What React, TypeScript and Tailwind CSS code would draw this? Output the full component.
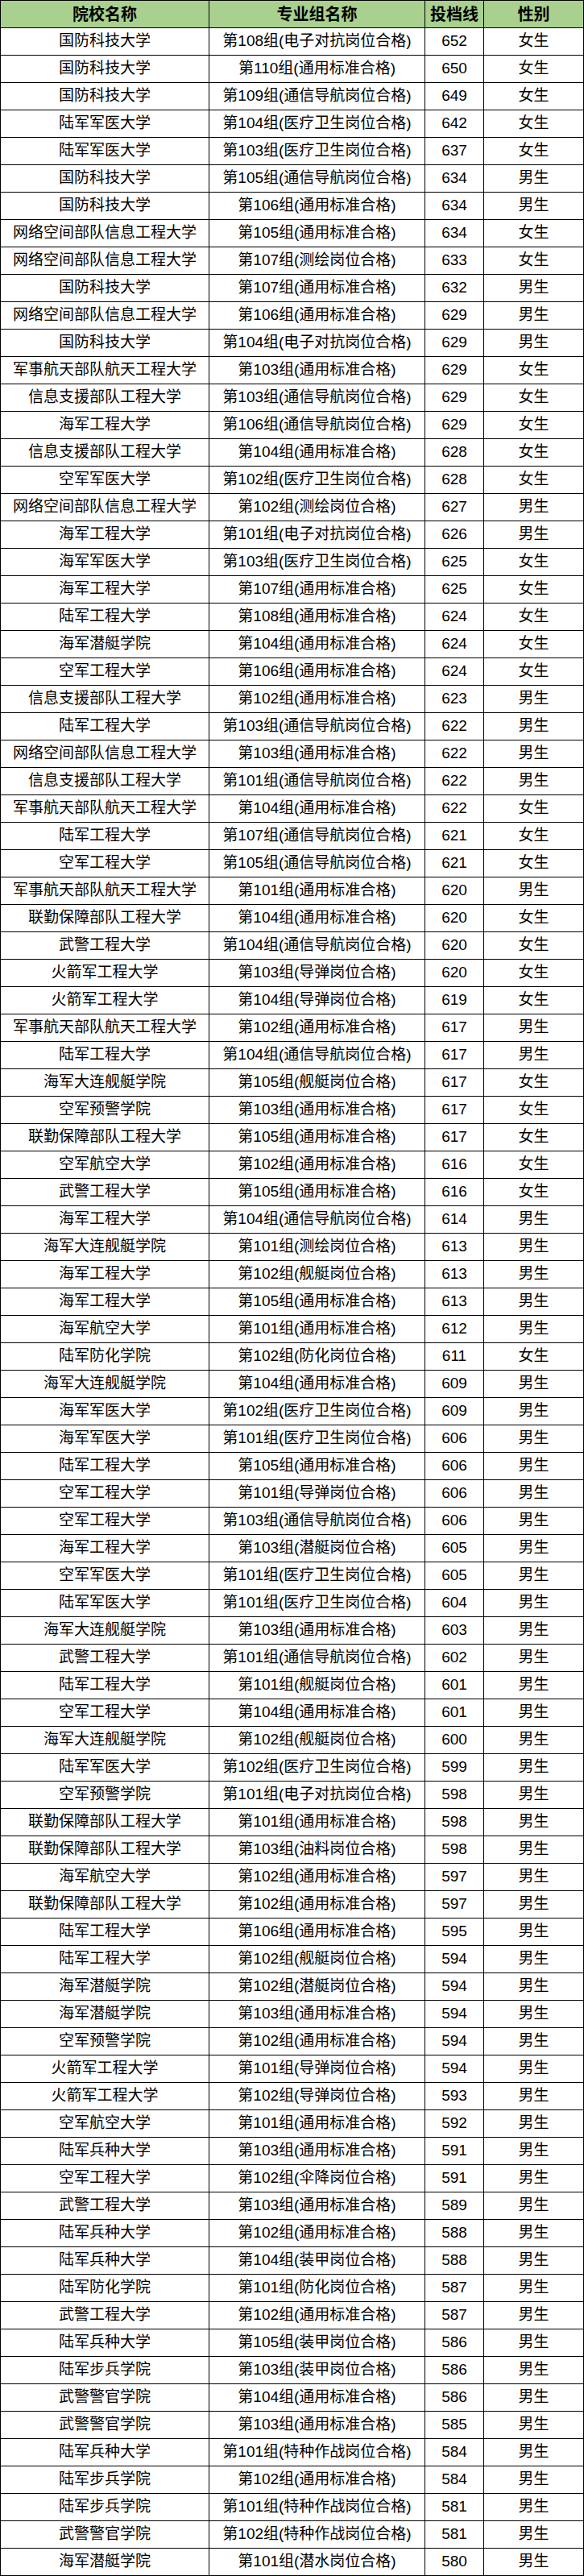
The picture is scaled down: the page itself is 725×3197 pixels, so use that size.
const rows: [string, string, string, string][] = [
  ["国防科技大学", "第108组(电子对抗岗位合格)", "652", "女生"],
  ["国防科技大学", "第110组(通用标准合格)", "650", "女生"],
  ["国防科技大学", "第109组(通信导航岗位合格)", "649", "女生"],
  ["陆军军医大学", "第104组(医疗卫生岗位合格)", "642", "女生"],
  ["陆军军医大学", "第103组(医疗卫生岗位合格)", "637", "女生"],
  ["国防科技大学", "第105组(通信导航岗位合格)", "634", "男生"],
  ["国防科技大学", "第106组(通用标准合格)", "634", "男生"],
  ["网络空间部队信息工程大学", "第105组(通用标准合格)", "634", "女生"],
  ["网络空间部队信息工程大学", "第107组(测绘岗位合格)", "633", "女生"],
  ["国防科技大学", "第107组(通用标准合格)", "632", "男生"],
  ["网络空间部队信息工程大学", "第106组(通用标准合格)", "629", "男生"],
  ["国防科技大学", "第104组(电子对抗岗位合格)", "629", "男生"],
  ["军事航天部队航天工程大学", "第103组(通用标准合格)", "629", "女生"],
  ["信息支援部队工程大学", "第103组(通信导航岗位合格)", "629", "女生"],
  ["海军工程大学", "第106组(通信导航岗位合格)", "629", "女生"],
  ["信息支援部队工程大学", "第104组(通用标准合格)", "628", "女生"],
  ["空军军医大学", "第102组(医疗卫生岗位合格)", "628", "女生"],
  ["网络空间部队信息工程大学", "第102组(测绘岗位合格)", "627", "男生"],
  ["海军工程大学", "第101组(电子对抗岗位合格)", "626", "男生"],
  ["海军军医大学", "第103组(医疗卫生岗位合格)", "625", "女生"],
  ["海军工程大学", "第107组(通用标准合格)", "625", "女生"],
  ["陆军工程大学", "第108组(通用标准合格)", "624", "女生"],
  ["海军潜艇学院", "第104组(通用标准合格)", "624", "女生"],
  ["空军工程大学", "第106组(通用标准合格)", "624", "女生"],
  ["信息支援部队工程大学", "第102组(通用标准合格)", "623", "男生"],
  ["陆军工程大学", "第103组(通信导航岗位合格)", "622", "男生"],
  ["网络空间部队信息工程大学", "第103组(通用标准合格)", "622", "男生"],
  ["信息支援部队工程大学", "第101组(通信导航岗位合格)", "622", "男生"],
  ["军事航天部队航天工程大学", "第104组(通用标准合格)", "622", "女生"],
  ["陆军工程大学", "第107组(通信导航岗位合格)", "621", "女生"],
  ["空军工程大学", "第105组(通信导航岗位合格)", "621", "女生"],
  ["军事航天部队航天工程大学", "第101组(通用标准合格)", "620", "男生"],
  ["联勤保障部队工程大学", "第104组(通用标准合格)", "620", "女生"],
  ["武警工程大学", "第104组(通信导航岗位合格)", "620", "女生"],
  ["火箭军工程大学", "第103组(导弹岗位合格)", "620", "女生"],
  ["火箭军工程大学", "第104组(导弹岗位合格)", "619", "女生"],
  ["军事航天部队航天工程大学", "第102组(通用标准合格)", "617", "男生"],
  ["陆军工程大学", "第104组(通信导航岗位合格)", "617", "男生"],
  ["海军大连舰艇学院", "第105组(舰艇岗位合格)", "617", "女生"],
  ["空军预警学院", "第103组(通用标准合格)", "617", "女生"],
  ["联勤保障部队工程大学", "第105组(通用标准合格)", "617", "女生"],
  ["空军航空大学", "第102组(通用标准合格)", "616", "女生"],
  ["武警工程大学", "第105组(通用标准合格)", "616", "女生"],
  ["海军工程大学", "第104组(通信导航岗位合格)", "614", "男生"],
  ["海军大连舰艇学院", "第101组(测绘岗位合格)", "613", "男生"],
  ["海军工程大学", "第102组(舰艇岗位合格)", "613", "男生"],
  ["海军工程大学", "第105组(通用标准合格)", "613", "男生"],
  ["海军航空大学", "第101组(通用标准合格)", "612", "男生"],
  ["陆军防化学院", "第102组(防化岗位合格)", "611", "女生"],
  ["海军大连舰艇学院", "第104组(通用标准合格)", "609", "男生"],
  ["海军军医大学", "第102组(医疗卫生岗位合格)", "609", "男生"],
  ["海军军医大学", "第101组(医疗卫生岗位合格)", "606", "男生"],
  ["陆军工程大学", "第105组(通用标准合格)", "606", "男生"],
  ["空军工程大学", "第101组(导弹岗位合格)", "606", "男生"],
  ["空军工程大学", "第103组(通信导航岗位合格)", "606", "男生"],
  ["海军工程大学", "第103组(潜艇岗位合格)", "605", "男生"],
  ["空军军医大学", "第101组(医疗卫生岗位合格)", "605", "男生"],
  ["陆军军医大学", "第101组(医疗卫生岗位合格)", "604", "男生"],
  ["海军大连舰艇学院", "第103组(通用标准合格)", "603", "男生"],
  ["武警工程大学", "第101组(通信导航岗位合格)", "602", "男生"],
  ["陆军工程大学", "第101组(舰艇岗位合格)", "601", "男生"],
  ["空军工程大学", "第104组(通用标准合格)", "601", "男生"],
  ["海军大连舰艇学院", "第102组(舰艇岗位合格)", "600", "男生"],
  ["陆军军医大学", "第102组(医疗卫生岗位合格)", "599", "男生"],
  ["空军预警学院", "第101组(电子对抗岗位合格)", "598", "男生"],
  ["联勤保障部队工程大学", "第101组(通用标准合格)", "598", "男生"],
  ["联勤保障部队工程大学", "第103组(油料岗位合格)", "598", "男生"],
  ["海军航空大学", "第102组(通用标准合格)", "597", "男生"],
  ["联勤保障部队工程大学", "第102组(通用标准合格)", "597", "男生"],
  ["陆军工程大学", "第106组(通用标准合格)", "595", "男生"],
  ["陆军工程大学", "第102组(舰艇岗位合格)", "594", "男生"],
  ["海军潜艇学院", "第102组(潜艇岗位合格)", "594", "男生"],
  ["海军潜艇学院", "第103组(通用标准合格)", "594", "男生"],
  ["空军预警学院", "第102组(通用标准合格)", "594", "男生"],
  ["火箭军工程大学", "第101组(导弹岗位合格)", "594", "男生"],
  ["火箭军工程大学", "第102组(导弹岗位合格)", "593", "男生"],
  ["空军航空大学", "第101组(通用标准合格)", "592", "男生"],
  ["陆军兵种大学", "第103组(通用标准合格)", "591", "男生"],
  ["空军工程大学", "第102组(伞降岗位合格)", "591", "男生"],
  ["武警工程大学", "第103组(通用标准合格)", "589", "男生"],
  ["陆军兵种大学", "第102组(通用标准合格)", "588", "男生"],
  ["陆军兵种大学", "第104组(装甲岗位合格)", "588", "男生"],
  ["陆军防化学院", "第101组(防化岗位合格)", "587", "男生"],
  ["武警工程大学", "第102组(通用标准合格)", "587", "男生"],
  ["陆军兵种大学", "第105组(装甲岗位合格)", "586", "男生"],
  ["陆军步兵学院", "第103组(装甲岗位合格)", "586", "男生"],
  ["武警警官学院", "第104组(通用标准合格)", "586", "男生"],
  ["武警警官学院", "第103组(通用标准合格)", "585", "男生"],
  ["陆军兵种大学", "第101组(特种作战岗位合格)", "584", "男生"],
  ["陆军步兵学院", "第102组(通用标准合格)", "584", "男生"],
  ["陆军步兵学院", "第101组(特种作战岗位合格)", "581", "男生"],
  ["武警警官学院", "第102组(特种作战岗位合格)", "581", "男生"],
  ["海军潜艇学院", "第101组(潜水岗位合格)", "580", "男生"],
];

const font = "font-['Liberation_Sans','Noto_Sans_CJK_SC',sans-serif]";

const App = () => {
  return (
    <div className={`w-[725px] bg-white text-black border-t border-black ${font}`}>
      {/* header */}
      <div className="flex h-[34px] border-b border-black bg-[#a9d08e] text-[20px] font-bold">
        <div className="w-[259px] border-l border-black flex items-center justify-center">院校名称</div>
        <div className="w-[268px] border-l border-black flex items-center justify-center">专业组名称</div>
        <div className="w-[73px] border-l border-black flex items-center justify-center">投档线</div>
        <div className="flex-1 border-l border-r border-black flex items-center justify-center">性别</div>
      </div>
      {rows.map((r, i) => (
        <div key={i} className="flex h-[34px] border-b border-black text-[19px]">
          <div className="w-[259px] border-l border-black flex items-center justify-center whitespace-nowrap">{r[0]}</div>
          <div className="w-[268px] border-l border-black flex items-center justify-center whitespace-nowrap">{r[1]}</div>
          <div className="w-[73px] border-l border-black flex items-center justify-center">{r[2]}</div>
          <div className="flex-1 border-l border-r border-black flex items-center justify-center">{r[3]}</div>
        </div>
      ))}
    </div>
  );
};

export default App;
